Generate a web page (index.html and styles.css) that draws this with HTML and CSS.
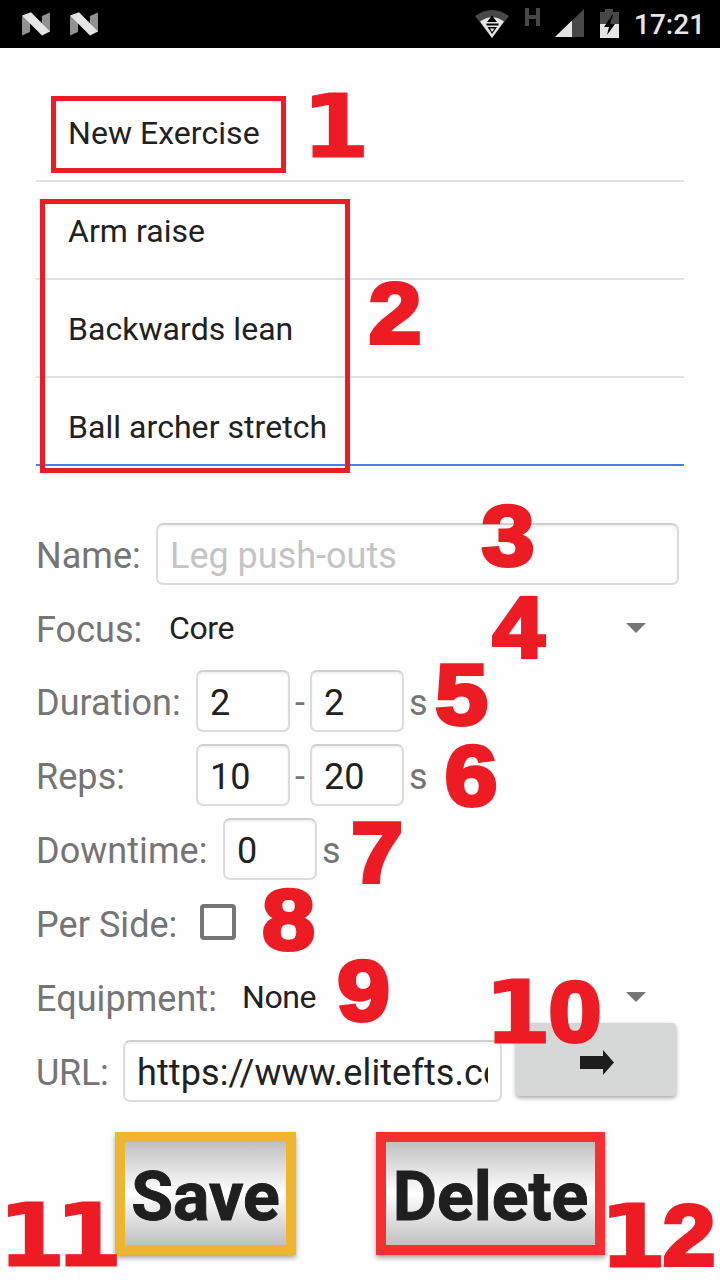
FILE: index.html
```html
<!DOCTYPE html>
<html lang="en">
<head>
<meta charset="utf-8">
<title>Exercises</title>
<link rel="stylesheet" href="styles.css">
</head>
<body>
<header class="status">
  <svg class="nicon" viewBox="0 0 28 24"><path fill="#919191" d="M0 4 8 8v12L0 23.500zM20 4l8-3.500V20l-8-4z"/><path fill="#e5e5e5" d="M0 3.500 9 .3 28 19.500 20 23.500z"/></svg>
  <svg class="nicon" viewBox="0 0 28 24"><path fill="#919191" d="M0 4 8 8v12L0 23.500zM20 4l8-3.500V20l-8-4z"/><path fill="#e5e5e5" d="M0 3.500 9 .3 28 19.500 20 23.500z"/></svg>
  <svg class="signals" viewBox="0 0 148 34">
    <path fill="#484848" d="M0 8Q17-4 34 8L17 30z"/>
    <path fill="#e5e5e5" d="M5 13.500Q17 5 29 13.500L17 30z"/>
    <path fill="#000" d="M17 7.500 22 14H12zM11.500 15.500h12v2h-12zM12.500 19h9.500L17 26z"/>
    <path fill="#e5e5e5" d="M15 20.500h4.500L17 24z"/>
    <path fill="#484848" d="M50 0h4v7h7V0h4v18h-4v-7h-7v7h-4z"/>
    <path fill="#484848" d="M109 1v28H80z"/><path fill="#e5e5e5" d="M97 12.500V29H80z"/>
    <path fill="#484848" d="M125 4h5V1h8v3h6v12h-19z"/><path fill="#e5e5e5" d="M125 16h19v14h-19z"/>
    <path fill="#000" d="m137 7-8 12h5l-2 8 8-11h-5l3-9z"/>
  </svg>
  <span class="clock">17:21</span>
</header>
<main class="page">
  <ul class="list">
    <li>New Exercise</li><li>Arm raise</li><li>Backwards lean</li><li>Ball archer stretch</li>
  </ul>
  <section class="form">
    <div class="row"><span class="label l-name">Name:</span><div class="field wide hint">Leg push-outs</div></div>
    <div class="row"><span class="label l-focus">Focus:</span><span class="choice">Core</span><i class="caret"></i></div>
    <div class="row"><span class="label l-range">Duration:</span><div class="field">2</div><span class="dash">-</span><div class="field">2</div><span class="unit">s</span></div>
    <div class="row"><span class="label l-range">Reps:</span><div class="field">10</div><span class="dash">-</span><div class="field">20</div><span class="unit">s</span></div>
    <div class="row"><span class="label l-down">Downtime:</span><div class="field">0</div><span class="unit">s</span></div>
    <div class="row"><span class="label l-side">Per Side:</span><span class="check"></span></div>
    <div class="row"><span class="label l-equip">Equipment:</span><span class="choice">None</span><i class="caret"></i></div>
    <div class="row"><span class="label l-url">URL:</span><div class="field url"><span class="clip">https://www.elitefts.com</span></div>
      <div class="go"><svg class="arrow" viewBox="0 0 34 26"><path fill="#1d1d1d" d="M0 6h23V0l11 12.500L23 25v-6H0z"/></svg></div></div>
  </section>
  <div class="actions"><div class="btn save">Save</div><div class="btn delete">Delete</div></div>
</main>
<div class="mark mark-new"></div>
<div class="mark mark-list"></div>
<svg class="numbers" viewBox="0 0 720 1280">
  <text class="one" transform="translate(335.800 157) scale(1.12 1)">1</text>
  <text transform="translate(395 342.500) scale(1.1 1)">2</text>
  <text transform="translate(508 565) scale(1.1 1)">3</text>
  <text transform="translate(518.500 656.500) scale(1.08 1)">4</text>
  <text transform="translate(461.500 724) scale(1.1 1)">5</text>
  <text transform="translate(471 805) scale(1.1 1)">6</text>
  <text transform="translate(377 881.500) scale(1.08 1)">7</text>
  <text transform="translate(288.500 949) scale(1.1 1)">8</text>
  <text transform="translate(363.500 1020) scale(1.1 1)">9</text>
  <text class="one" transform="translate(517.800 1043) scale(1.12 1)">1</text><text transform="translate(575 1041) scale(1.1 1)">0</text>
  <text class="one" transform="translate(31.800 1266) scale(1.12 1)">1</text><text class="one" transform="translate(88.800 1266) scale(1.12 1)">1</text>
  <text class="one" transform="translate(633 1267) scale(1.12 1)">1</text><text transform="translate(689 1264.500) scale(1.1 1)">2</text>
</svg>
</body>
</html>
```
FILE: styles.css
```css
* { box-sizing: border-box; }
body { margin: 0; width: 720px; height: 1280px; position: relative; overflow: hidden; background: #fefefe; font-family: Roboto, sans-serif; color: #212121; }
.status { height: 48px; background: #000; display: flex; align-items: flex-start; padding: 0 16px 0 22px; color: #e5e5e5; }
.nicon { width: 28px; height: 24px; margin: 12px 20px 0 0; flex: none; }
.signals { width: 148px; height: 34px; margin: 8px 0 0 357px; flex: none; }
.clock { font-size: 28px; font-weight: 500; line-height: 48px; margin: 1px 0 0 11px; }
.page { padding: 36px 36px 0; }
.list { list-style: none; margin: 0; padding: 0; height: 382px; overflow: hidden; border-bottom: 2px solid #3f7ff0; }
.list li { height: 98px; line-height: 96px; padding: 1px 32px 0; border-bottom: 2px solid #e0e0e0; font-size: 32px; letter-spacing: .05px; }
.form { margin-top: 51px; display: grid; grid-template-rows: 74px 73px repeat(6, 74px); font-size: 36px; color: #757575; }
.row { display: flex; align-items: center; white-space: nowrap; }
.label, .dash, .unit { padding-top: 4px; line-height: 42px; flex: none; }
.label { letter-spacing: .05px; }
.l-name { width: 120px; } .l-focus { width: 131px; } .l-range { width: 160px; }
.l-down { width: 187px; } .l-side { width: 164px; } .l-equip { width: 204px; } .l-url { width: 87px; letter-spacing: -.3px; }
.field { flex: none; width: 94px; height: 62px; border: 2px solid #dcdcdc; border-top-color: #cfcfcf; border-radius: 7px; box-shadow: inset 0 2px 2px #f2f2f2; color: #212121; padding: 3px 12px 0; line-height: 56px; }
.wide { width: 523px; }
.hint { color: #c4c4c4; }
.dash { width: 20px; text-align: center; }
.unit { padding-left: 5px; }
.choice { font-size: 32px; letter-spacing: -.4px; color: #212121; padding-left: 2px; flex: 1; }
.caret { border: 10px solid transparent; border-top-color: #757575; border-bottom: 0; margin-right: 38px; }
.check { width: 36px; height: 36px; border: 4px solid #757575; border-radius: 4px; margin-bottom: 2px; }
.url { width: 379px; }
.clip { display: block; overflow: hidden; letter-spacing: .1px; }
.go { flex: none; width: 160px; height: 73px; margin: 0 0 23px 14px; border-radius: 4px; background: #d6d7d7; box-shadow: 0 2px 4px rgba(0,0,0,.35); display: flex; align-items: center; justify-content: center; }
.arrow { width: 34px; height: 26px; margin: 7px 0 0 2px; }
.actions { display: flex; gap: 80px; padding-left: 79px; margin-top: 24px; }
.btn { height: 123px; border: 10px solid; background: linear-gradient(#c0c0c0, #fff, #c0c0c0) padding-box; box-shadow: 0 3px 5px rgba(0,0,0,.35); font-size: 68px; font-weight: 700; line-height: 110px; text-align: center; white-space: nowrap; color: #1f1f1f; -webkit-text-stroke: 1px #1f1f1f; }
.save { width: 181px; border-color: #edb62f; }
.delete { width: 229px; border-color: #f43030; }
.mark { position: absolute; border: 5px solid #ed1c24; }
.mark-new { left: 51px; top: 96px; width: 235px; height: 77px; }
.mark-list { left: 40px; top: 199px; width: 310px; height: 274px; }
.numbers { position: absolute; left: 0; top: 0; width: 720px; height: 1280px; font: 700 86px "Liberation Sans", sans-serif; fill: #ed1c24; stroke: #ed1c24; stroke-width: 4px; text-anchor: middle; }
.one { font: 700 88px "DejaVu Sans", sans-serif; stroke-width: 1px; }
```
